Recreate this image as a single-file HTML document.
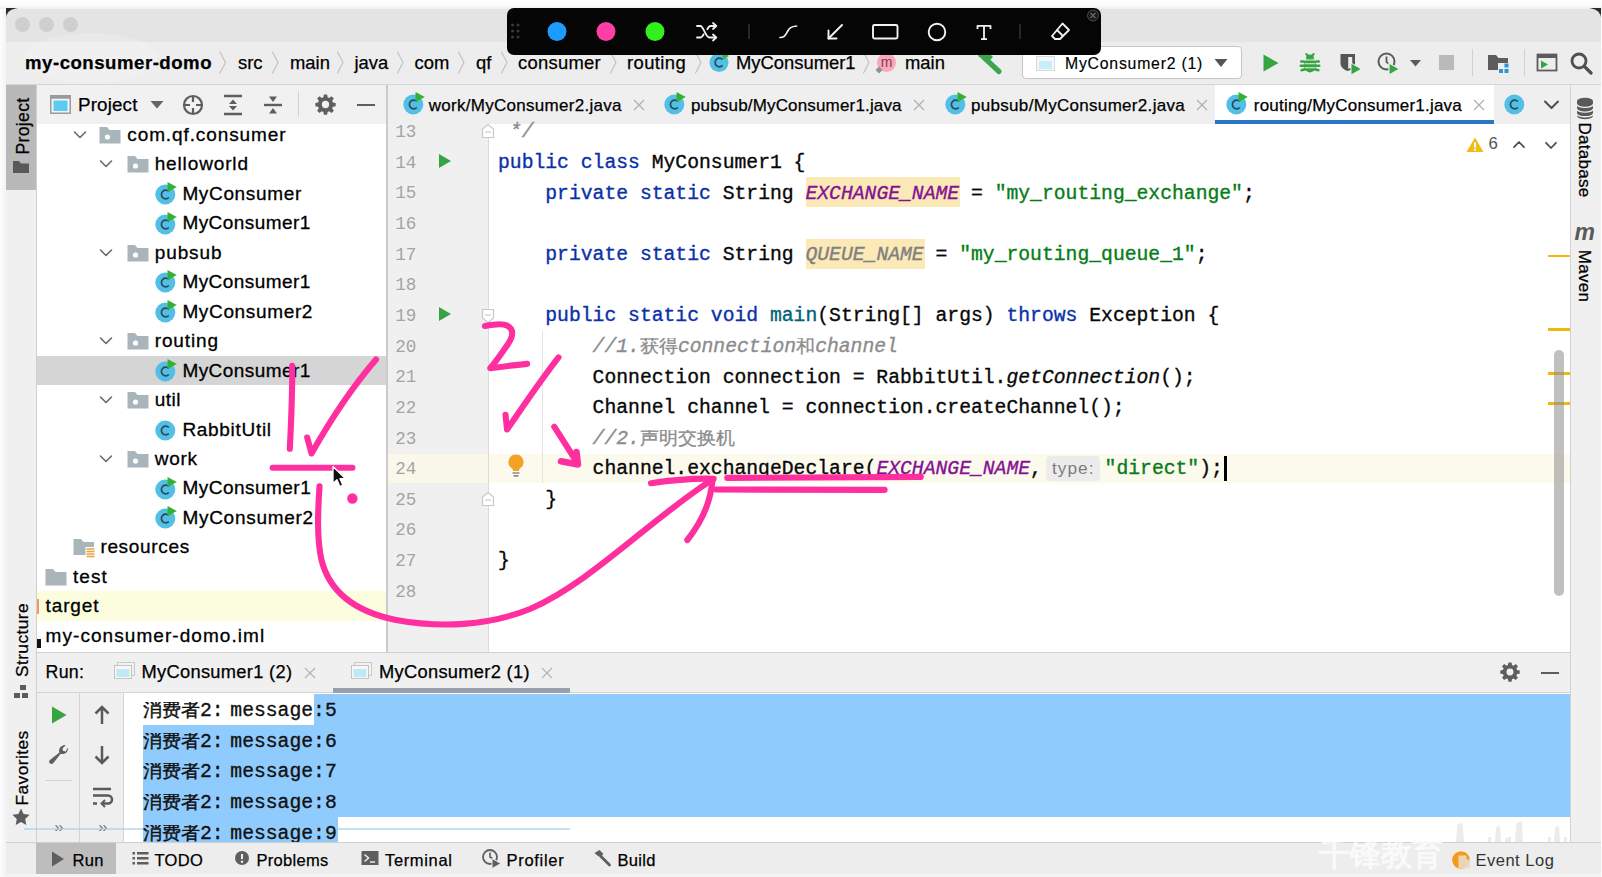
<!DOCTYPE html>
<html>
<head>
<meta charset="utf-8">
<title>my-consumer-domo</title>
<style>
html,body{margin:0;padding:0;}
body{width:1602px;height:877px;overflow:hidden;background:#fdfdfd;position:relative;font-family:"Liberation Sans",sans-serif;color:#000;}
.abs{position:absolute;}
#win{position:absolute;left:6px;top:8px;width:1595px;height:869px;background:#ececec;border-radius:10px 10px 0 0;overflow:hidden;}
/* all children of #root are positioned in page coords */
#root{position:absolute;left:0;top:0;width:1602px;height:877px;overflow:hidden;}
.t{position:absolute;white-space:pre;line-height:1;}
.ui{font-family:"Liberation Sans",sans-serif;font-size:18.5px;color:#000;-webkit-text-stroke:0.25px #000;}
.mono{font-family:"Liberation Mono",monospace;font-size:19.72px;color:#000;}
.cjk{display:inline-block;text-align:center;overflow:hidden;vertical-align:top;font-size:18.8px;-webkit-text-stroke:0;}
/* code colours */
.kw{color:#0a31a8;}
.str{color:#067d17;}
.fld{color:#871094;font-style:italic;}
.cm{color:#8c8c8c;font-style:italic;}
.fn{color:#00627a;}
.it{font-style:italic;}
.ln{position:absolute;left:388px;width:28px;text-align:right;color:#a4a4a4;font-family:"Liberation Mono",monospace;font-size:17.6px;line-height:1;white-space:pre;}
.code{position:absolute;left:498px;white-space:pre;line-height:1;font-family:"Liberation Mono",monospace;font-size:19.72px;color:#080808;-webkit-text-stroke:0.35px;}
.con{color:#111;}
.con .cjk{-webkit-text-stroke:0.4px;}
.cm .cjk{-webkit-text-stroke:0.3px;}
.tree{position:absolute;white-space:pre;line-height:1;font-size:19.6px;color:#000;-webkit-text-stroke:0.3px #000;}
</style>
</head>
<body>
<div id="root">

<!-- ===== window background ===== -->
<div class="abs" style="left:0;top:0;width:1602px;height:10px;background:linear-gradient(to bottom,#fefefe 0,#fcfcfc 50%,#f2f2f2 80%,#e8e8e8 100%);"></div>
<div class="abs" style="left:0;top:9px;width:8px;height:868px;background:linear-gradient(to right,#fdfdfd 0,#f8f8f8 40%,#f0f0f0 100%);"></div>
<div class="abs" style="left:6px;top:8.500px;width:1595px;height:869px;background:#ededed;border-radius:9px 9px 0 0;"></div>
<!-- dark corner artefacts -->
<svg class="abs" style="left:6px;top:8px" width="12" height="12"><path d="M0 0H12C5 1 1 5 0 12Z" fill="#2a2a2e"/></svg>
<svg class="abs" style="left:1589px;top:8px" width="12" height="12"><path d="M12 0H0C7 1 11 5 12 12Z" fill="#2a2a2e"/></svg>

<!-- ===== title bar ===== -->
<div class="abs" id="titlebar" style="left:6px;top:8.5px;width:1595px;height:33px;background:#e4e4e4;border-radius:9px 9px 0 0;"></div>
<div class="abs" style="left:6px;top:41.5px;width:1595px;height:1px;background:#dcdcdc;"></div>
<div class="abs" style="left:15px;top:17px;width:15px;height:15px;border-radius:50%;background:#cfcfcf;"></div>
<div class="abs" style="left:39px;top:17px;width:15px;height:15px;border-radius:50%;background:#cfcfcf;"></div>
<div class="abs" style="left:63px;top:17px;width:15px;height:15px;border-radius:50%;background:#cfcfcf;"></div>

<!-- ===== nav bar ===== -->
<div class="abs" id="navbar" style="left:6px;top:42px;width:1595px;height:42px;background:#ededed;"></div>
<div class="abs" style="left:6px;top:84px;width:1595px;height:1px;background:#d6d6d6;"></div>

<!-- faint watermark blob in nav bar -->
<div class="abs" style="left:24px;top:33px;width:134px;height:50px;border-radius:50%;background:rgba(255,255,255,0.18);"></div>
<div class="t ui" id="nv0" style="left:25px;top:53.5px;font-weight:bold;font-size:18.6px;letter-spacing:0.52px;">my-consumer-domo</div>
<svg class="abs" style="left:0;top:42px" width="960" height="42" viewBox="0 42 960 42" fill="none" stroke="#c2c2c2" stroke-width="1.2" stroke-linecap="round" stroke-linejoin="round">
<path d="M220 52l5.5 10.5L220 73"/><path d="M272.5 52l5.5 10.5-5.5 10.5"/><path d="M337.500 52l5.500 10.500-5.500 10.500"/><path d="M397.500 52l5.500 10.500-5.500 10.500"/><path d="M458.500 52l5.500 10.500-5.500 10.500"/><path d="M501.500 52l5.500 10.500-5.500 10.500"/><path d="M610.500 52l5.500 10.500-5.500 10.500"/><path d="M695.500 52l5.500 10.500-5.500 10.500"/><path d="M863.500 52l5.500 10.500-5.500 10.500"/>
</svg>
<div class="t ui" id="nv1" style="left:238px;top:53.5px;font-size:18.4px;">src</div>
<div class="t ui" id="nv2" style="left:290px;top:53.5px;font-size:18.4px;">main</div>
<div class="t ui" id="nv3" style="left:354.5px;top:53.5px;font-size:18.4px;">java</div>
<div class="t ui" id="nv4" style="left:414.5px;top:53.5px;font-size:18.4px;">com</div>
<div class="t ui" id="nv5" style="left:476px;top:53.5px;font-size:18.4px;">qf</div>
<div class="t ui" id="nv6" style="left:518px;top:53.5px;font-size:18.4px;letter-spacing:0.27px;">consumer</div>
<div class="t ui" id="nv7" style="left:627px;top:53.5px;font-size:18.4px;letter-spacing:0.4px;">routing</div>
<!-- class icon -->
<svg class="abs" style="left:709px;top:51px" width="22" height="22" viewBox="0 0 22 22"><circle cx="10" cy="11.500" r="9.5" fill="#52bfe6"/><path d="M13.6 8.6a4.300 4.300 0 1 0 0 5.800" fill="none" stroke="#2d4a58" stroke-width="1.700"/><path d="M13.500 1l6.500 4-6.500 4z" fill="#3fae49"/></svg>
<div class="t ui" id="nv8" style="left:736px;top:53.5px;font-size:18.4px;">MyConsumer1</div>
<!-- method icon -->
<svg class="abs" style="left:874px;top:52px" width="24" height="24" viewBox="0 0 24 24"><circle cx="12.500" cy="10.500" r="9.5" fill="#f7a8ba"/><text x="12.500" y="15" font-family="Liberation Sans, sans-serif" font-size="14" text-anchor="middle" fill="#8b3a4c">m</text><path d="M5 14.500l3.500 3.500-3.500 3.500-3.500-3.500z" fill="#8a9199"/></svg>
<div class="t ui" id="nv9" style="left:905px;top:53.5px;font-size:18.4px;">main</div>
<!-- hammer -->
<svg class="abs" style="left:973px;top:47.500px" width="32" height="32" viewBox="0 0 32 32"><path d="M6 6l8-3 6 6-3 3-2.500-1.500L12 13 5 8z" fill="#3da64c"/><path d="M11 9.500l15 14" stroke="#3da64c" stroke-width="5.200" stroke-linecap="round"/></svg>
<!-- run config box -->
<div class="abs" style="left:1022px;top:46px;width:218px;height:31px;background:#fff;border:1px solid #c6c6c6;border-radius:4px;"></div>
<svg class="abs" style="left:1036px;top:56px" width="20" height="16" viewBox="0 0 20 16"><rect x="0.500" y="0.500" width="18" height="14" fill="#f4f7f9" stroke="#d5dade"/><rect x="3" y="5" width="13" height="8" fill="#c9eefb"/></svg>
<div class="t ui" id="nvrc" style="left:1065px;top:56.4px;font-size:15.8px;letter-spacing:0.78px;-webkit-text-stroke:0.15px #000;">MyConsumer2 (1)</div>
<svg class="abs" style="left:1213px;top:57px" width="16" height="12" viewBox="0 0 16 12"><path d="M1.500 2h13l-6.500 8z" fill="#555"/></svg>
<!-- run -->
<svg class="abs" style="left:1260px;top:52px" width="22" height="22" viewBox="0 0 22 22"><path d="M3.500 2.500l15 8.500-15 8.500z" fill="#36a443"/></svg>
<!-- debug bug -->
<svg class="abs" style="left:1298px;top:51px" width="24" height="24" viewBox="0 0 24 24"><g fill="#36a443"><ellipse cx="12" cy="14.200" rx="6.300" ry="7.300"/><path d="M7.800 7.800a4.200 4.200 0 0 1 8.400 0z"/></g><g stroke="#36a443" stroke-width="2.500" stroke-linecap="round"><path d="M3.200 10.500h4M16.800 10.500h4M2.800 14.800h4M17.200 14.800h4M3.600 19.200l3.600-1M20.400 19.200l-3.600-1"/><path d="M8.300 3l1.700 2M15.700 3l-1.700 2" stroke-width="2"/></g><g stroke="#ededed" stroke-width="1.100"><path d="M6 9h12M6.500 12.700h11M6.500 16.700h11"/></g></svg>
<!-- coverage -->
<svg class="abs" style="left:1338px;top:51px" width="26" height="26" viewBox="0 0 26 26"><path d="M2.500 3h14.500v9.500c0 3.500-3.500 6.500-7.250 7.500C6 19 2.500 16 2.500 12.500z" fill="#555"/><path d="M10.200 6h4v9.500c-1 1.200-2.300 1.800-4 2.300z" fill="#ededed"/><path d="M13 12l10.500 6-10.500 6z" fill="#36a443" stroke="#eeeeee" stroke-width="1"/></svg>
<!-- profiler -->
<svg class="abs" style="left:1376px;top:51px" width="26" height="26" viewBox="0 0 26 26"><circle cx="10.500" cy="10.500" r="8" fill="none" stroke="#5a5a5a" stroke-width="2"/><path d="M10.500 5.500v5.500l3 2" fill="none" stroke="#5a5a5a" stroke-width="1.800"/><path d="M13 12l10.500 6-10.500 6z" fill="#36a443" stroke="#eeeeee" stroke-width="1.200"/></svg>
<svg class="abs" style="left:1409px;top:58px" width="13" height="10" viewBox="0 0 13 10"><path d="M1 2h11l-5.500 6.500z" fill="#5a5a5a"/></svg>
<!-- stop -->
<div class="abs" style="left:1439px;top:55px;width:15px;height:15px;background:#bababa;"></div>
<div class="abs" style="left:1472px;top:49px;width:1px;height:27px;background:#d0d0d0;"></div>
<!-- project structure -->
<svg class="abs" style="left:1486px;top:52px" width="26" height="24" viewBox="0 0 26 24"><path d="M2 3h8l2.500 3H22v12H2z" fill="#5c5c5c"/><path d="M12 11h12v12H12z" fill="#eeeeee"/><rect x="13" y="17" width="4" height="4" fill="#2b95d6"/><rect x="18.500" y="17" width="4" height="4" fill="#2b95d6"/><rect x="18.500" y="11.500" width="4" height="4" fill="#2b95d6"/></svg>
<div class="abs" style="left:1524px;top:49px;width:1px;height:27px;background:#d0d0d0;"></div>
<!-- run anything -->
<svg class="abs" style="left:1536px;top:53px" width="24" height="20" viewBox="0 0 24 20"><rect x="1.500" y="1.500" width="19" height="16" fill="none" stroke="#5c5c5c" stroke-width="1.800"/><rect x="1" y="1" width="20" height="4" fill="#5c5c5c"/><path d="M5 7.500l7 4-7 4z" fill="#36a443"/></svg>
<!-- search -->
<svg class="abs" style="left:1569px;top:50.500px" width="24" height="24" viewBox="0 0 24 24" fill="none" stroke="#505050" stroke-width="2.800"><circle cx="10" cy="10" r="7"/><path d="M15.500 15.500l6.500 6.500" stroke-linecap="round" stroke-width="3.200"/></svg>


<!-- ===== left stripe ===== -->
<div class="abs" style="left:6px;top:85px;width:30px;height:757px;background:#f0f0f0;"></div>
<div class="abs" style="left:36px;top:85px;width:1px;height:757px;background:#d0d0d0;"></div>
<div class="abs" style="left:6px;top:85px;width:30px;height:105px;background:#b9b9b9;"></div>


<!-- ===== project panel ===== -->
<div class="abs" style="left:37px;top:85px;width:349px;height:39px;background:#f1f1f1;"></div>
<div class="abs" style="left:37px;top:124px;width:349px;height:528px;background:#ffffff;"></div>
<div class="abs" style="left:386px;top:85px;width:1.6px;height:567px;background:#cbcbcb;"></div>
<!-- left stripe: Project tab -->
<div class="t ui" style="left:-14.8px;top:116px;width:80px;height:20px;text-align:center;font-size:17.6px;transform:rotate(-90deg);transform-origin:center;letter-spacing:0.3px;" id="lsproj">Project</div>
<svg class="abs" style="left:12px;top:159px" width="18" height="16" viewBox="0 0 18 16"><path d="M1 2h6l2 2.500h8V14H1z" fill="#595959"/></svg>
<!-- Structure / Favorites -->
<div class="t ui" style="left:-21.5px;top:630px;width:90px;height:20px;text-align:center;font-size:17.4px;transform:rotate(-90deg);letter-spacing:0.4px;" id="lsstruct">Structure</div>
<svg class="abs" style="left:13px;top:684px" width="16" height="16" viewBox="0 0 16 16" fill="#5c5c5c"><rect x="7" y="1" width="6" height="5"/><rect x="1" y="9" width="6" height="5"/><rect x="9" y="9" width="6" height="5"/></svg>
<div class="t ui" style="left:-21.5px;top:758px;width:90px;height:20px;text-align:center;font-size:17.4px;transform:rotate(-90deg);letter-spacing:0.4px;" id="lsfav">Favorites</div>
<svg class="abs" style="left:11px;top:807px" width="20" height="20" viewBox="0 0 20 20"><path d="M10 1.500l2.600 5.600 6 .7-4.400 4.200 1.100 6-5.300-3-5.300 3 1.100-6L1.400 7.800l6-.7z" fill="#5c5c5c"/></svg>
<!-- black mark by iml row -->
<div class="abs" style="left:37px;top:639px;width:3.5px;height:8.500px;background:#111;"></div>

<!-- project header -->
<svg class="abs" style="left:50px;top:95px" width="22" height="20" viewBox="0 0 22 20"><rect x="0.750" y="0.750" width="19.500" height="17.500" fill="#f4f4f4" stroke="#9a9a9a" stroke-width="1.500"/><rect x="0.750" y="0.750" width="19.500" height="3" fill="#9a9a9a"/><rect x="3.500" y="5.500" width="14" height="10.500" fill="#5ccbf0"/></svg>
<div class="t ui" id="pjh" style="left:78px;top:95.5px;font-size:18.8px;letter-spacing:0.15px;">Project</div>
<svg class="abs" style="left:149px;top:99px" width="16" height="11" viewBox="0 0 16 11"><path d="M1.500 2h13l-6.500 7.500z" fill="#666"/></svg>
<!-- locate -->
<svg class="abs" style="left:181px;top:93px" width="24" height="24" viewBox="0 0 24 24" fill="none" stroke="#5e5e5e" stroke-width="2.200"><circle cx="12" cy="12" r="9"/><path d="M12 3v6M12 15v6M3 12h6M15 12h6"/></svg>
<!-- expand all -->
<svg class="abs" style="left:222px;top:93px" width="22" height="24" viewBox="0 0 22 24" fill="none" stroke="#5e5e5e" stroke-width="2.400"><path d="M2 3h18M2 21h18"/><path d="M11 6.500l4 4.500h-8zM11 17.500l4-4.500h-8z" fill="#5e5e5e" stroke="none"/></svg>
<!-- collapse all -->
<svg class="abs" style="left:262px;top:93px" width="22" height="24" viewBox="0 0 22 24" fill="none" stroke="#5e5e5e" stroke-width="2.400"><path d="M2 12h18"/><path d="M11 9l4-5.500h-8zM11 15l4 5.500h-8z" fill="#5e5e5e" stroke="none"/></svg>
<div class="abs" style="left:298px;top:91px;width:1px;height:26px;background:#d3d3d3;"></div>
<!-- gear -->
<svg class="abs" style="left:314px;top:93px" width="23" height="23" viewBox="0 0 24 24"><path fill="#5e5e5e" fill-rule="evenodd" d="M10.300 1.500h3.400l.5 2.900 1.700.7 2.400-1.700 2.400 2.400-1.700 2.400.7 1.700 2.900.5v3.400l-2.900.5-.7 1.700 1.700 2.400-2.400 2.400-2.400-1.700-1.700.7-.5 2.900h-3.400l-.5-2.900-1.700-.7-2.400 1.700-2.400-2.400 1.700-2.400-.7-1.700-2.900-.5v-3.400l2.900-.5.700-1.700-1.700-2.400 2.400-2.400 2.400 1.700 1.700-.7zM12 8.200a3.800 3.800 0 1 0 0 7.600 3.800 3.800 0 0 0 0-7.600z"/></svg>
<div class="abs" style="left:357px;top:103.500px;width:18px;height:2.200px;background:#5e5e5e;"></div>

<!-- tree rows backgrounds -->
<div class="abs" style="left:37px;top:355.500px;width:349px;height:29.500px;background:#d5d5d5;"></div>
<div class="abs" style="left:37px;top:591px;width:349px;height:29.500px;background:#fcfcdf;"></div>
<div class="abs" style="left:37px;top:598.500px;width:2.200px;height:15px;background:#ee9a62;"></div>
<!-- TREE-START -->
<svg class="abs" style="left:73px;top:129.7px" width="14" height="10" viewBox="0 0 14 10"><path d="M1.500 2l5.500 5.500L12.500 2" fill="none" stroke="#6a6a6a" stroke-width="1.600" stroke-linecap="round" stroke-linejoin="round"/></svg>
<svg class="abs" style="left:99px;top:125.7px" width="22" height="18" viewBox="0 0 22 18"><path d="M0.500 1h7.500l2.500 3H21.500v13.500H0.500z" fill="#a9b4bb"/><circle cx="8.500" cy="11" r="2.600" fill="#fff"/></svg>
<div class="tree" id="tr0" style="left:127.3px;top:125.0px;font-size:19.0px;letter-spacing:0.89px;">com.qf.consumer</div>
<svg class="abs" style="left:99px;top:159.1px" width="14" height="10" viewBox="0 0 14 10"><path d="M1.500 2l5.500 5.500L12.500 2" fill="none" stroke="#6a6a6a" stroke-width="1.600" stroke-linecap="round" stroke-linejoin="round"/></svg>
<svg class="abs" style="left:127px;top:155.1px" width="22" height="18" viewBox="0 0 22 18"><path d="M0.500 1h7.500l2.500 3H21.500v13.500H0.500z" fill="#a9b4bb"/><circle cx="8.500" cy="11" r="2.600" fill="#fff"/></svg>
<div class="tree" id="tr1" style="left:154.7px;top:154.4px;font-size:19.0px;letter-spacing:0.86px;">helloworld</div>
<svg class="abs" style="left:154.7px;top:182.1px" width="22" height="23" viewBox="0 0 22 23"><circle cx="10.300" cy="12.500" r="10" fill="#52bfe6"/><path d="M13.800 9.500a4.300 4.300 0 1 0 0 6" fill="none" stroke="#2d4a58" stroke-width="1.700"/><path d="M12.500 0l9.300 5-9.300 5.300z" fill="#35b035"/></svg>
<div class="tree" id="tr2" style="left:182.4px;top:183.9px;font-size:19.0px;letter-spacing:0.65px;">MyConsumer</div>
<svg class="abs" style="left:154.7px;top:211.5px" width="22" height="23" viewBox="0 0 22 23"><circle cx="10.300" cy="12.500" r="10" fill="#52bfe6"/><path d="M13.800 9.500a4.300 4.300 0 1 0 0 6" fill="none" stroke="#2d4a58" stroke-width="1.700"/><path d="M12.500 0l9.300 5-9.300 5.300z" fill="#35b035"/></svg>
<div class="tree" id="tr3" style="left:182.4px;top:213.3px;font-size:19.0px;letter-spacing:0.44px;">MyConsumer1</div>
<svg class="abs" style="left:99px;top:247.5px" width="14" height="10" viewBox="0 0 14 10"><path d="M1.500 2l5.500 5.500L12.500 2" fill="none" stroke="#6a6a6a" stroke-width="1.600" stroke-linecap="round" stroke-linejoin="round"/></svg>
<svg class="abs" style="left:127px;top:243.5px" width="22" height="18" viewBox="0 0 22 18"><path d="M0.500 1h7.500l2.500 3H21.500v13.500H0.500z" fill="#a9b4bb"/><circle cx="8.500" cy="11" r="2.600" fill="#fff"/></svg>
<div class="tree" id="tr4" style="left:154.7px;top:242.8px;font-size:19.0px;letter-spacing:0.91px;">pubsub</div>
<svg class="abs" style="left:154.7px;top:270.4px" width="22" height="23" viewBox="0 0 22 23"><circle cx="10.300" cy="12.500" r="10" fill="#52bfe6"/><path d="M13.800 9.500a4.300 4.300 0 1 0 0 6" fill="none" stroke="#2d4a58" stroke-width="1.700"/><path d="M12.500 0l9.300 5-9.300 5.300z" fill="#35b035"/></svg>
<div class="tree" id="tr5" style="left:182.4px;top:272.2px;font-size:19.0px;letter-spacing:0.44px;">MyConsumer1</div>
<svg class="abs" style="left:154.7px;top:299.9px" width="22" height="23" viewBox="0 0 22 23"><circle cx="10.300" cy="12.500" r="10" fill="#52bfe6"/><path d="M13.800 9.500a4.300 4.300 0 1 0 0 6" fill="none" stroke="#2d4a58" stroke-width="1.700"/><path d="M12.500 0l9.300 5-9.300 5.300z" fill="#35b035"/></svg>
<div class="tree" id="tr6" style="left:182.4px;top:301.7px;font-size:19.0px;letter-spacing:0.65px;">MyConsumer2</div>
<svg class="abs" style="left:99px;top:335.9px" width="14" height="10" viewBox="0 0 14 10"><path d="M1.500 2l5.500 5.500L12.500 2" fill="none" stroke="#6a6a6a" stroke-width="1.600" stroke-linecap="round" stroke-linejoin="round"/></svg>
<svg class="abs" style="left:127px;top:331.9px" width="22" height="18" viewBox="0 0 22 18"><path d="M0.500 1h7.500l2.500 3H21.500v13.500H0.500z" fill="#a9b4bb"/><circle cx="8.500" cy="11" r="2.600" fill="#fff"/></svg>
<div class="tree" id="tr7" style="left:154.7px;top:331.2px;font-size:19.0px;letter-spacing:0.89px;">routing</div>
<svg class="abs" style="left:154.7px;top:358.8px" width="22" height="23" viewBox="0 0 22 23"><circle cx="10.300" cy="12.500" r="10" fill="#52bfe6"/><path d="M13.800 9.500a4.300 4.300 0 1 0 0 6" fill="none" stroke="#2d4a58" stroke-width="1.700"/><path d="M12.500 0l9.300 5-9.300 5.300z" fill="#35b035"/></svg>
<div class="tree" id="tr8" style="left:182.4px;top:360.6px;font-size:19.0px;letter-spacing:0.44px;">MyConsumer1</div>
<svg class="abs" style="left:99px;top:394.8px" width="14" height="10" viewBox="0 0 14 10"><path d="M1.500 2l5.500 5.500L12.500 2" fill="none" stroke="#6a6a6a" stroke-width="1.600" stroke-linecap="round" stroke-linejoin="round"/></svg>
<svg class="abs" style="left:127px;top:390.8px" width="22" height="18" viewBox="0 0 22 18"><path d="M0.500 1h7.500l2.500 3H21.500v13.500H0.500z" fill="#a9b4bb"/><circle cx="8.500" cy="11" r="2.600" fill="#fff"/></svg>
<div class="tree" id="tr9" style="left:154.7px;top:390.1px;font-size:19.0px;letter-spacing:0.49px;">util</div>
<svg class="abs" style="left:154.7px;top:417.7px" width="22" height="23" viewBox="0 0 22 23"><circle cx="10.300" cy="12.500" r="10" fill="#52bfe6"/><path d="M13.800 9.500a4.300 4.300 0 1 0 0 6" fill="none" stroke="#2d4a58" stroke-width="1.700"/></svg>
<div class="tree" id="tr10" style="left:182.4px;top:419.5px;font-size:19.0px;letter-spacing:0.70px;">RabbitUtil</div>
<svg class="abs" style="left:99px;top:453.6px" width="14" height="10" viewBox="0 0 14 10"><path d="M1.500 2l5.500 5.500L12.500 2" fill="none" stroke="#6a6a6a" stroke-width="1.600" stroke-linecap="round" stroke-linejoin="round"/></svg>
<svg class="abs" style="left:127px;top:449.6px" width="22" height="18" viewBox="0 0 22 18"><path d="M0.500 1h7.500l2.500 3H21.500v13.500H0.500z" fill="#a9b4bb"/><circle cx="8.500" cy="11" r="2.600" fill="#fff"/></svg>
<div class="tree" id="tr11" style="left:154.7px;top:448.9px;font-size:19.0px;letter-spacing:0.74px;">work</div>
<svg class="abs" style="left:154.7px;top:476.6px" width="22" height="23" viewBox="0 0 22 23"><circle cx="10.300" cy="12.500" r="10" fill="#52bfe6"/><path d="M13.800 9.500a4.300 4.300 0 1 0 0 6" fill="none" stroke="#2d4a58" stroke-width="1.700"/><path d="M12.500 0l9.300 5-9.300 5.300z" fill="#35b035"/></svg>
<div class="tree" id="tr12" style="left:182.4px;top:478.4px;font-size:19.0px;letter-spacing:0.48px;">MyConsumer1</div>
<svg class="abs" style="left:154.7px;top:506.0px" width="22" height="23" viewBox="0 0 22 23"><circle cx="10.300" cy="12.500" r="10" fill="#52bfe6"/><path d="M13.800 9.500a4.300 4.300 0 1 0 0 6" fill="none" stroke="#2d4a58" stroke-width="1.700"/><path d="M12.500 0l9.300 5-9.300 5.300z" fill="#35b035"/></svg>
<div class="tree" id="tr13" style="left:182.4px;top:507.8px;font-size:19.0px;letter-spacing:0.72px;">MyConsumer2</div>
<svg class="abs" style="left:73px;top:538.0px" width="23" height="20" viewBox="0 0 23 20"><path d="M0.500 1h7.500l2.500 3H21v13H0.500z" fill="#a9b4bb"/><rect x="12.500" y="9" width="10" height="11" fill="#fff"/><path d="M13.500 11h8M13.500 13.500h8M13.500 16h8M13.500 18.500h8" stroke="#e9a53c" stroke-width="1.500"/></svg>
<div class="tree" id="tr14" style="left:100.4px;top:537.3px;font-size:19.0px;letter-spacing:0.67px;">resources</div>
<svg class="abs" style="left:45px;top:567.5px" width="22" height="18" viewBox="0 0 22 18"><path d="M0.500 1h7.500l2.500 3H21.500v13.500H0.500z" fill="#a9b4bb"/></svg>
<div class="tree" id="tr15" style="left:73px;top:566.8px;font-size:19.0px;letter-spacing:1.02px;">test</div>
<div class="tree" id="tr16" style="left:45.6px;top:596.2px;font-size:19.0px;letter-spacing:0.86px;">target</div>
<div class="tree" id="tr17" style="left:45.6px;top:625.6px;font-size:19.0px;letter-spacing:1.06px;">my-consumer-domo.iml</div>
<!-- TREE-END -->


<!-- ===== editor tabs ===== -->
<div class="abs" style="left:388px;top:85px;width:1182px;height:39px;background:#efefef;"></div>
<div class="abs" style="left:388px;top:123.5px;width:1182px;height:1px;background:#d6d6d6;"></div>
<!-- active tab bg -->
<div class="abs" style="left:1215px;top:85px;width:279px;height:35px;background:#ffffff;"></div>
<div class="abs" style="left:1215px;top:120px;width:279px;height:4.500px;background:#2a75c4;"></div>
<!-- tab icons -->
<svg class="abs" style="left:402px;top:91.6px;margin-left:0.7px" width="22" height="23" viewBox="0 0 22 23"><circle cx="10.300" cy="12.500" r="10" fill="#52bfe6"/><path d="M13.800 9.500a4.300 4.300 0 1 0 0 6" fill="none" stroke="#2d4a58" stroke-width="1.700"/><path d="M12.500 0l9.300 5-9.300 5.300z" fill="#35b035"/></svg>
<div class="t ui" id="tb1" style="left:428.700px;top:96.6px;font-size:17px;letter-spacing:0.290px;">work/MyConsumer2.java</div>
<svg class="abs" style="left:633px;top:98.500px" width="12" height="12" viewBox="0 0 12 12"><path d="M1 1l10 10M11 1L1 11" stroke="#b0b0b0" stroke-width="1.300"/></svg>
<svg class="abs" style="left:663.700px;top:91.6px;margin-left:0.7px" width="22" height="23" viewBox="0 0 22 23"><circle cx="10.300" cy="12.500" r="10" fill="#52bfe6"/><path d="M13.800 9.500a4.300 4.300 0 1 0 0 6" fill="none" stroke="#2d4a58" stroke-width="1.700"/><path d="M12.500 0l9.300 5-9.300 5.300z" fill="#35b035"/></svg>
<div class="t ui" id="tb2" style="left:691px;top:96.6px;font-size:17px;letter-spacing:0.165px;">pubsub/MyConsumer1.java</div>
<svg class="abs" style="left:913px;top:98.500px" width="12" height="12" viewBox="0 0 12 12"><path d="M1 1l10 10M11 1L1 11" stroke="#b0b0b0" stroke-width="1.300"/></svg>
<svg class="abs" style="left:944px;top:91.6px;margin-left:0.7px" width="22" height="23" viewBox="0 0 22 23"><circle cx="10.300" cy="12.500" r="10" fill="#52bfe6"/><path d="M13.800 9.500a4.300 4.300 0 1 0 0 6" fill="none" stroke="#2d4a58" stroke-width="1.700"/><path d="M12.500 0l9.300 5-9.300 5.300z" fill="#35b035"/></svg>
<div class="t ui" id="tb3" style="left:971px;top:96.6px;font-size:17px;letter-spacing:0.310px;">pubsub/MyConsumer2.java</div>
<svg class="abs" style="left:1196px;top:98.500px" width="12" height="12" viewBox="0 0 12 12"><path d="M1 1l10 10M11 1L1 11" stroke="#b0b0b0" stroke-width="1.300"/></svg>
<svg class="abs" style="left:1225.700px;top:91.6px;margin-left:0.7px" width="22" height="23" viewBox="0 0 22 23"><circle cx="10.300" cy="12.500" r="10" fill="#52bfe6"/><path d="M13.800 9.500a4.300 4.300 0 1 0 0 6" fill="none" stroke="#2d4a58" stroke-width="1.700"/><path d="M12.500 0l9.300 5-9.300 5.300z" fill="#35b035"/></svg>
<div class="t ui" id="tb4" style="left:1253.800px;top:96.6px;font-size:17px;letter-spacing:0.210px;">routing/MyConsumer1.java</div>
<svg class="abs" style="left:1473px;top:98.500px" width="12" height="12" viewBox="0 0 12 12"><path d="M1 1l10 10M11 1L1 11" stroke="#b0b0b0" stroke-width="1.300"/></svg>
<svg class="abs" style="left:1503.700px;top:91.6px;margin-left:0.7px" width="22" height="23" viewBox="0 0 22 23"><circle cx="10.300" cy="12.500" r="10" fill="#52bfe6"/><path d="M13.800 9.500a4.300 4.300 0 1 0 0 6" fill="none" stroke="#2d4a58" stroke-width="1.700"/></svg>
<svg class="abs" style="left:1543px;top:99px" width="17" height="12" viewBox="0 0 17 12"><path d="M2 2.500l6.500 6.500L15 2.500" fill="none" stroke="#4d4d4d" stroke-width="2" stroke-linecap="round" stroke-linejoin="round"/></svg>


<!-- ===== editor ===== -->
<div class="abs" style="left:388px;top:124px;width:1182px;height:528px;background:#ffffff;"></div>
<div class="abs" style="left:388px;top:124px;width:100px;height:528px;background:#f0f0f0;"></div>
<div class="abs" style="left:488px;top:124px;width:1px;height:528px;background:#d9d9d9;"></div>
<!-- EDITOR-START -->
<div class="abs" style="left:388px;top:453.5px;width:1182px;height:29px;background:#fcfaed;"></div>
<div class="abs" style="left:388px;top:453.5px;width:100px;height:29px;background:#faf8ea;"></div>
<div class="abs" style="left:488px;top:124px;width:1px;height:528px;background:#dcdcdc;"></div>
<div class="abs" style="left:542px;top:330.5px;width:1px;height:152.6px;background:#e3e3e3;"></div>
<div class="abs" style="left:805.5px;top:177.3px;width:154.3px;height:30px;background:#fbe9b7;"></div>
<div class="abs" style="left:805.5px;top:238.6px;width:119px;height:30px;background:#fbe9b7;"></div>
<div class="abs" style="left:1046px;top:455.5px;width:54px;height:25.5px;background:#ececec;border-radius:4px;"></div>
<div class="t" id="hint" style="left:1052px;top:459.5px;font-family:'Liberation Sans',sans-serif;font-size:17.2px;color:#7c7c7c;letter-spacing:1.05px;">type:</div>
<div class="ln" style="left:395.2px;top:124.1px;width:auto;">13</div>
<div class="ln" style="left:395.2px;top:154.7px;width:auto;">14</div>
<div class="ln" style="left:395.2px;top:185.4px;width:auto;">15</div>
<div class="ln" style="left:395.2px;top:216.0px;width:auto;">16</div>
<div class="ln" style="left:395.2px;top:246.7px;width:auto;">17</div>
<div class="ln" style="left:395.2px;top:277.3px;width:auto;">18</div>
<div class="ln" style="left:395.2px;top:307.9px;width:auto;">19</div>
<div class="ln" style="left:395.2px;top:338.6px;width:auto;">20</div>
<div class="ln" style="left:395.2px;top:369.2px;width:auto;">21</div>
<div class="ln" style="left:395.2px;top:399.9px;width:auto;">22</div>
<div class="ln" style="left:395.2px;top:430.5px;width:auto;">23</div>
<div class="ln" style="left:395.2px;top:461.1px;width:auto;">24</div>
<div class="ln" style="left:395.2px;top:491.8px;width:auto;">25</div>
<div class="ln" style="left:395.2px;top:522.4px;width:auto;">26</div>
<div class="ln" style="left:395.2px;top:553.1px;width:auto;">27</div>
<div class="ln" style="left:395.2px;top:583.7px;width:auto;">28</div>
<div class="code" style="left:498.0px;top:123.4px;"> <span class="cm">*/</span></div>
<div class="code" id="c14" style="left:498.0px;top:154.0px;"><span class="kw">public class</span> MyConsumer1 {</div>
<div class="code" id="c15" style="left:498.0px;top:184.7px;">    <span class="kw">private static</span> String <span class="fld">EXCHANGE_NAME</span> = <span class="str">"my_routing_exchange"</span>;</div>
<div class="code" id="c17" style="left:498.0px;top:246.0px;">    <span class="kw">private static</span> String <span class="cm" style="color:#808080">QUEUE_NAME</span> = <span class="str">"my_routing_queue_1"</span>;</div>
<div class="code" id="c19" style="left:498.0px;top:307.2px;">    <span class="kw">public static void</span> <span class="fn">main</span>(String[] args) <span class="kw">throws</span> Exception {</div>
<div class="code" id="c20" style="left:498.0px;top:337.9px;">        <span class="cm">//1.<span class="cjk" style="width:38px;font-style:normal;">获得</span>connection<span class="cjk" style="width:19px;font-style:normal;">和</span>channel</span></div>
<div class="code" id="c21" style="left:498.0px;top:368.5px;">        Connection connection = RabbitUtil.<span class="it">getConnection</span>();</div>
<div class="code" id="c22" style="left:498.0px;top:399.2px;">        Channel channel = connection.createChannel();</div>
<div class="code" id="c23" style="left:498.0px;top:429.8px;">        <span class="cm">//2.<span class="cjk" style="width:95px;font-style:normal;">声明交换机</span></span></div>
<div class="code" id="c24" style="left:498.0px;top:460.4px;">        channel.exchangeDeclare(<span class="fld">EXCHANGE_NAME</span>,</div>
<div class="code" id="c24b" style="left:1104.6px;top:460.4px;"><span class="str">"direct"</span>);</div>
<div class="code" style="left:498.0px;top:491.1px;">    }</div>
<div class="code" style="left:498.0px;top:552.4px;">}</div>
<div class="abs" style="left:1223.5px;top:455.5px;width:3px;height:25.5px;background:#000;"></div>
<svg class="abs" style="left:438px;top:153.1px" width="14" height="16" viewBox="0 0 14 16"><path d="M1 1l12 7-12 7z" fill="#36a443"/></svg>
<svg class="abs" style="left:438px;top:306.3px" width="14" height="16" viewBox="0 0 14 16"><path d="M1 1l12 7-12 7z" fill="#36a443"/></svg>
<svg class="abs" style="left:481px;top:123.0px" width="14" height="16" viewBox="0 0 14 16"><path d="M1.500 6L7 1.500 12.500 6v8.500h-11z" fill="#fff" stroke="#c8c8c8" stroke-width="1.200"/><path d="M4 9h6" stroke="#c8c8c8" stroke-width="1.200"/></svg>
<svg class="abs" style="left:481px;top:307.8px" width="14" height="16" viewBox="0 0 14 16"><path d="M1.500 1.500h11v8.500L7 14.500 1.500 10z" fill="#fff" stroke="#c8c8c8" stroke-width="1.200"/><path d="M4 7h6" stroke="#c8c8c8" stroke-width="1.200"/></svg>
<svg class="abs" style="left:481px;top:490.7px" width="14" height="16" viewBox="0 0 14 16"><path d="M1.500 6L7 1.500 12.500 6v8.500h-11z" fill="#fff" stroke="#c8c8c8" stroke-width="1.200"/><path d="M4 9h6" stroke="#c8c8c8" stroke-width="1.200"/></svg>
<svg class="abs" style="left:506px;top:453.0px" width="20" height="26" viewBox="0 0 20 26"><path d="M10 1.500a7.500 7.500 0 0 0-4.500 13.500c1 .8 1.500 1.700 1.500 3h6c0-1.300.5-2.200 1.500-3A7.500 7.500 0 0 0 10 1.500z" fill="#f2a325"/><path d="M6.500 20h7M7.500 22.800h5" stroke="#8a8a8a" stroke-width="1.700"/></svg>
<svg class="abs" style="left:1465px;top:136px" width="20" height="18" viewBox="0 0 20 18"><path d="M10 1.500L18.500 16h-17z" fill="#f0bd14"/><path d="M10 6.500v5" stroke="#fff" stroke-width="2"/><circle cx="10" cy="13.700" r="1.100" fill="#fff"/></svg>
<div class="t" id="insp6" style="left:1488.5px;top:136.3px;font-family:'Liberation Sans',sans-serif;font-size:16.8px;color:#555;">6</div>
<svg class="abs" style="left:1511px;top:139px" width="16" height="11" viewBox="0 0 16 11"><path d="M3 8.200L8 3l5 5.200" fill="none" stroke="#505050" stroke-width="1.800" stroke-linecap="round" stroke-linejoin="round"/></svg>
<svg class="abs" style="left:1543px;top:140px" width="16" height="11" viewBox="0 0 16 11"><path d="M3 2.800l5 5.200 5-5.200" fill="none" stroke="#505050" stroke-width="1.800" stroke-linecap="round" stroke-linejoin="round"/></svg>
<div class="abs" style="left:1548px;top:254.5px;width:22px;height:2.6px;background:#efb710;"></div>
<div class="abs" style="left:1548px;top:328px;width:22px;height:2.6px;background:#efb710;"></div>
<div class="abs" style="left:1548px;top:372px;width:22px;height:2.6px;background:#efb710;"></div>
<div class="abs" style="left:1548px;top:402px;width:22px;height:2.6px;background:#efb710;"></div>
<div class="abs" style="left:1554px;top:350px;width:10px;height:246px;background:rgba(140,140,140,0.55);border-radius:5px;"></div>
<!-- EDITOR-END -->

<!-- ===== right stripe ===== -->
<div class="abs" style="left:1570px;top:85px;width:1px;height:757px;background:#d2d2d2;"></div>
<div class="abs" style="left:1571px;top:85px;width:30px;height:757px;background:#f0f0f0;"></div>
<!-- RIGHT-START -->
<svg class="abs" style="left:1575.500px;top:97px" width="18" height="23" viewBox="0 0 18 23"><path d="M1 4.200v14.600c0 1.900 3.600 3.400 8 3.400s8-1.500 8-3.400V4.200z" fill="#595959"/><ellipse cx="9" cy="4.200" rx="8" ry="3.400" fill="#595959"/><g fill="none" stroke="#f0f0f0" stroke-width="1.400"><path d="M0.500 6.800c0 2.100 3.800 3.600 8.500 3.600s8.500-1.500 8.500-3.600"/><path d="M0.500 11.500c0 2.100 3.800 3.600 8.500 3.600s8.500-1.500 8.500-3.600"/><path d="M0.500 16.200c0 2.100 3.800 3.600 8.500 3.600s8.500-1.500 8.500-3.600"/></g></svg>
<div class="t ui" id="rsdb" style="left:1537.500px;top:149.500px;width:90px;height:20px;text-align:center;font-size:17px;transform:rotate(90deg);letter-spacing:0.3px;">Database</div>
<div class="t ui" id="rsm" style="left:1574.500px;top:220.500px;font-size:23px;font-weight:bold;font-style:italic;color:#5a5a5a;-webkit-text-stroke:0;">m</div>
<div class="t ui" id="rsmv" style="left:1537.500px;top:265.500px;width:90px;height:20px;text-align:center;font-size:17px;transform:rotate(90deg);letter-spacing:0.3px;">Maven</div>
<!-- RIGHT-END -->

<!-- ===== run panel ===== -->
<div class="abs" style="left:37px;top:652px;width:1533px;height:1px;background:#d0d0d0;"></div>
<div class="abs" style="left:37px;top:653px;width:1533px;height:39px;background:#f0f0f0;"></div>
<div class="abs" style="left:37px;top:692px;width:1533px;height:1px;background:#d4d4d4;"></div>
<div class="abs" style="left:37px;top:693px;width:87px;height:149px;background:#efefef;"></div>
<div class="abs" style="left:79px;top:693px;width:1px;height:149px;background:#d4d4d4;"></div>
<div class="abs" style="left:123px;top:693px;width:1px;height:149px;background:#d4d4d4;"></div>
<div class="abs" style="left:124px;top:693px;width:1446px;height:149px;background:#ffffff;"></div>
<!-- RUN-START -->
<!-- run header -->
<div class="t ui" id="rn0" style="left:45.5px;top:663.5px;font-size:17.8px;letter-spacing:0.3px;">Run:</div>
<svg class="abs" style="left:114px;top:662px" width="21" height="18" viewBox="0 0 21 18"><rect x="3.500" y="0.500" width="17" height="13" fill="#f2f2f2" stroke="#c9c9c9"/><rect x="0.500" y="3.500" width="17" height="13" fill="#f7f7f7" stroke="#c4c4c4"/><rect x="2.500" y="7" width="13" height="8" fill="#bfe9f7"/></svg>
<div class="t ui" id="rn1" style="left:141.5px;top:663px;font-size:18.3px;letter-spacing:0.3px;">MyConsumer1 (2)</div>
<svg class="abs" style="left:304px;top:667px" width="12" height="12" viewBox="0 0 12 12"><path d="M1 1l10 10M11 1L1 11" stroke="#b5b5b5" stroke-width="1.300"/></svg>
<svg class="abs" style="left:351px;top:662px" width="21" height="18" viewBox="0 0 21 18"><rect x="3.500" y="0.500" width="17" height="13" fill="#f2f2f2" stroke="#c9c9c9"/><rect x="0.500" y="3.500" width="17" height="13" fill="#f7f7f7" stroke="#c4c4c4"/><rect x="2.500" y="7" width="13" height="8" fill="#bfe9f7"/></svg>
<div class="t ui" id="rn2" style="left:379px;top:663px;font-size:18.3px;letter-spacing:0.3px;">MyConsumer2 (1)</div>
<svg class="abs" style="left:541px;top:667px" width="12" height="12" viewBox="0 0 12 12"><path d="M1 1l10 10M11 1L1 11" stroke="#b5b5b5" stroke-width="1.300"/></svg>
<div class="abs" style="left:333px;top:688px;width:237px;height:4.500px;background:#9aa0ab;"></div>
<!-- gear / minimize -->
<svg class="abs" style="left:1499px;top:661px" width="22" height="22" viewBox="0 0 24 24"><path fill="#5e5e5e" fill-rule="evenodd" d="M10.300 1.500h3.400l.5 2.900 1.700.7 2.400-1.700 2.400 2.400-1.700 2.400.7 1.700 2.900.5v3.400l-2.900.5-.7 1.700 1.700 2.400-2.400 2.400-2.400-1.700-1.700.7-.5 2.900h-3.400l-.5-2.900-1.700-.7-2.400 1.700-2.400-2.400 1.700-2.400-.7-1.700-2.900-.5v-3.400l2.900-.5.700-1.700-1.700-2.400 2.400-2.400 2.400 1.700 1.700-.7zM12 8.200a3.800 3.800 0 1 0 0 7.600 3.800 3.800 0 0 0 0-7.600z"/></svg>
<div class="abs" style="left:1541px;top:671.500px;width:18px;height:2.200px;background:#5e5e5e;"></div>
<!-- left toolbars -->
<svg class="abs" style="left:50px;top:705px" width="18" height="20" viewBox="0 0 18 20"><path d="M2 1.500l14.500 8.500L2 18.500z" fill="#36a443"/></svg>
<svg class="abs" style="left:47px;top:743px" width="24" height="24" viewBox="0 0 24 24"><path d="M21 4.500a5.600 5.600 0 0 1-7.300 6.300L6.200 20.300a2.300 2.300 0 0 1-3.300-3.300l9.500-7.500A5.600 5.600 0 0 1 18.700 2.200l-3.200 3.200.6 2.600 2.600.6z" fill="#5e5e5e"/></svg>
<div class="abs" style="left:45px;top:780px;width:27px;height:1px;background:#d4d4d4;"></div>
<svg class="abs" style="left:92px;top:704px" width="20" height="22" viewBox="0 0 20 22" fill="none" stroke="#5a5a5a" stroke-width="2.500"><path d="M10 20V3M3.500 9.500L10 3l6.500 6.500"/></svg>
<svg class="abs" style="left:92px;top:744px" width="20" height="22" viewBox="0 0 20 22" fill="none" stroke="#5a5a5a" stroke-width="2.500"><path d="M10 2v17M3.500 12.500L10 19l6.500-6.500"/></svg>
<svg class="abs" style="left:91px;top:785px" width="24" height="24" viewBox="0 0 24 24" fill="none" stroke="#5a5a5a" stroke-width="2.500"><path d="M2 4h18M2 10.500h15a4 4 0 0 1 0 8h-6M2 18.500h4"/><path d="M14 15l-3.500 3.500L14 22" stroke-width="1.900"/></svg>
<div class="t" style="left:54.5px;top:819px;font-family:'Liberation Sans',sans-serif;font-size:15px;color:#6a6a6a;letter-spacing:-1px;">&#8250;&#8250;</div>
<div class="t" style="left:98.5px;top:819px;font-family:'Liberation Sans',sans-serif;font-size:15px;color:#6a6a6a;letter-spacing:-1px;">&#8250;&#8250;</div>
<!-- console selection -->
<div class="abs" style="left:313.700px;top:693.500px;width:1256.300px;height:31px;background:#90cbfe;"></div>
<div class="abs" style="left:142.600px;top:724.500px;width:1427.400px;height:92.500px;background:#90cbfe;"></div>
<div class="abs" style="left:142.600px;top:816.500px;width:195.200px;height:25.500px;background:#90cbfe;"></div>
<!-- faint blue line -->
<div class="abs" style="left:24px;top:827.500px;width:546px;height:2px;background:rgba(160,205,235,0.6);"></div>
<!-- console text -->
<div class="code con" id="co1" style="left:143px;top:702.1px;"><span class="cjk" style="width:57px;">消费者</span>2<span style="display:inline-block;width:18.5px;">:</span>message:5</div>
<div class="code con" id="co2" style="left:143px;top:732.7px;"><span class="cjk" style="width:57px;">消费者</span>2<span style="display:inline-block;width:18.5px;">:</span>message:6</div>
<div class="code con" id="co3" style="left:143px;top:763.3px;"><span class="cjk" style="width:57px;">消费者</span>2<span style="display:inline-block;width:18.5px;">:</span>message:7</div>
<div class="code con" id="co4" style="left:143px;top:793.9px;"><span class="cjk" style="width:57px;">消费者</span>2<span style="display:inline-block;width:18.5px;">:</span>message:8</div>
<div class="code con" id="co5" style="left:143px;top:824.5px;"><span class="cjk" style="width:57px;">消费者</span>2<span style="display:inline-block;width:18.5px;">:</span>message:9</div>
<!-- RUN-END -->

<!-- ===== bottom stripe ===== -->
<div class="abs" style="left:6px;top:842px;width:1595px;height:1px;background:#cfcfcf;"></div>
<div class="abs" style="left:6px;top:843px;width:1595px;height:30.5px;background:#ededed;"></div>
<div class="abs" style="left:6px;top:874px;width:1595px;height:3px;background:#f4f4f4;"></div>
<!-- BOTTOM-START -->
<div class="abs" style="left:36px;top:843px;width:80px;height:31px;background:#bdbdbd;"></div>
<svg class="abs" style="left:50px;top:850px" width="16" height="18" viewBox="0 0 16 18"><path d="M2 1.500l12 7.500-12 7.500z" fill="#5e5e5e"/></svg>
<div class="t ui" id="bt0" style="left:72.500px;top:851.500px;font-size:16.500px;letter-spacing:0.3px;">Run</div>
<svg class="abs" style="left:132px;top:851px" width="17" height="15" viewBox="0 0 17 15" fill="#5e5e5e"><rect x="0.500" y="1" width="2.500" height="2.500"/><rect x="5" y="1" width="11.500" height="2.500"/><rect x="0.500" y="6" width="2.500" height="2.500"/><rect x="5" y="6" width="11.500" height="2.500"/><rect x="0.500" y="11" width="2.500" height="2.500"/><rect x="5" y="11" width="11.500" height="2.500"/></svg>
<div class="t ui" id="bt1" style="left:154.500px;top:851.500px;font-size:16.500px;letter-spacing:0.3px;">TODO</div>
<svg class="abs" style="left:234px;top:850px" width="16" height="16" viewBox="0 0 16 16"><circle cx="8" cy="8" r="7" fill="#5e5e5e"/><path d="M8 4v5" stroke="#ececec" stroke-width="2"/><circle cx="8" cy="11.700" r="1.200" fill="#ececec"/></svg>
<div class="t ui" id="bt2" style="left:256.500px;top:851.500px;font-size:16.500px;letter-spacing:0.3px;">Problems</div>
<svg class="abs" style="left:361px;top:850px" width="18" height="16" viewBox="0 0 18 16"><rect x="0.500" y="1" width="17" height="14" fill="#5e5e5e"/><path d="M3.500 4.500l4 3.500-4 3.500M9 12h5" fill="none" stroke="#ececec" stroke-width="1.600"/></svg>
<div class="t ui" id="bt3" style="left:385px;top:851.5px;font-size:16.5px;letter-spacing:0.65px;">Terminal</div>
<svg class="abs" style="left:481px;top:848px" width="22" height="22" viewBox="0 0 22 22"><circle cx="9" cy="9" r="7" fill="none" stroke="#5e5e5e" stroke-width="1.800"/><path d="M9 4.500V9l2.500 1.500" fill="none" stroke="#5e5e5e" stroke-width="1.600"/><path d="M11 10.500l9 5-9 5z" fill="#5e5e5e" stroke="#ececec" stroke-width="1"/></svg>
<div class="t ui" id="bt4" style="left:506.5px;top:851.5px;font-size:16.5px;letter-spacing:0.7px;">Profiler</div>
<svg class="abs" style="left:592px;top:848px" width="20" height="20" viewBox="0 0 20 20"><path d="M2.500 5l5-3 4 4-2 2-1.500-1L6.500 8.500z" fill="#5e5e5e"/><path d="M8.500 8l9 9" stroke="#5e5e5e" stroke-width="2.800" stroke-linecap="round"/></svg>
<div class="t ui" id="bt5" style="left:617.500px;top:851.500px;font-size:16.500px;letter-spacing:0.3px;">Build</div>
<!-- event log -->
<svg class="abs" style="left:1451px;top:850px" width="22" height="20" viewBox="0 0 22 20"><circle cx="10" cy="10" r="8.800" fill="#f39a1d"/><path d="M7.500 5.500h8v4h3.500v9h-11.500z" fill="#e9dcc8" opacity="0.900"/></svg>
<div class="t ui" id="bt6" style="left:1475.500px;top:851.500px;font-size:16.500px;letter-spacing:0.5px;color:#333;-webkit-text-stroke:0;">Event Log</div>
<!-- watermark logo silhouettes -->
<svg class="abs" style="left:1450px;top:820px" width="124" height="23" viewBox="0 0 124 23" fill="#ececec"><path d="M6 22L7.500 4l5-1.500L14 22z"/><path d="M38 22h3v-5h-3zM45 22l1-15 4-1 1 16z"/><path d="M65 22l1.500-19 5.500-2 1 21z"/><path d="M55 22h3v-4h-3zM58 22h3v-5h-3z"/><path d="M98 22h3v-5h-3zM104 22l1-15 4-1 1 16zM114 22h3v-5h-3z"/></svg>
<!-- watermark -->
<div class="t" id="wm" style="left:1319px;top:839px;font-family:'Liberation Sans',sans-serif;font-size:31px;font-weight:bold;color:rgba(255,255,255,0.75);letter-spacing:0px;"><span class="cjk" style="width:124px;font-size:31px;overflow:visible;">千锋教育</span></div>
<!-- BOTTOM-END -->

<!-- ===== drawing toolbar (black) ===== -->
<div class="abs" style="left:507px;top:8px;width:594px;height:47px;background:#050505;border-radius:7px;"></div>
<!-- DRAWBAR-START -->
<svg class="abs" style="left:507px;top:8px" width="594" height="47" viewBox="507 8 594 47">
<g fill="#3a3a3a"><circle cx="512.500" cy="25" r="1.500"/><circle cx="518" cy="25" r="1.500"/><circle cx="512.500" cy="31" r="1.500"/><circle cx="518" cy="31" r="1.500"/><circle cx="512.500" cy="37" r="1.500"/><circle cx="518" cy="37" r="1.500"/></g>
<circle cx="557" cy="31.500" r="9.500" fill="#1e9bff"/>
<circle cx="606" cy="31.500" r="9.500" fill="#ff3fa6"/>
<circle cx="655" cy="31.500" r="9.500" fill="#33f01c"/>
<!-- shuffle -->
<g fill="none" stroke="#f2f2f2" stroke-width="1.800" stroke-linecap="round" stroke-linejoin="round">
<path d="M697 26h3.500c3 0 5 11.500 9 11.500h6"/><path d="M697 37.500h3.500c1.500 0 2.300-1.500 3.200-3.300M707.300 29.300c.8-1.700 1.600-3.300 3.200-3.300h5"/><path d="M713 23l3.300 3-3.300 3M713 34.500l3.300 3-3.300 3"/>
</g>
<path d="M749 24v15" stroke="#3a3a3a" stroke-width="1.300"/>
<!-- squiggle -->
<path d="M780 37.500c4.500 0 5.500-2.500 7.500-6s3.500-5 9-5.500" fill="none" stroke="#f2f2f2" stroke-width="1.700" stroke-linecap="round"/>
<!-- arrow -->
<g fill="none" stroke="#f2f2f2" stroke-width="1.900" stroke-linecap="round" stroke-linejoin="round"><path d="M842 25l-13.500 13.500"/><path d="M828.500 30.500v8h8"/></g>
<!-- rectangle -->
<rect x="873" y="25" width="24.500" height="13.500" rx="1.500" fill="none" stroke="#f2f2f2" stroke-width="1.900"/>
<!-- circle -->
<circle cx="937" cy="32" r="8.300" fill="none" stroke="#f2f2f2" stroke-width="1.900"/>
<!-- T -->
<path d="M977.500 29v-3.200h13V29M984 25.800v13.400M981 39.200h6" fill="none" stroke="#f2f2f2" stroke-width="1.800" stroke-linejoin="round"/>
<path d="M1020 24v15" stroke="#3a3a3a" stroke-width="1.300"/>
<!-- eraser -->
<g fill="none" stroke="#f2f2f2" stroke-width="1.800" stroke-linejoin="round"><path d="M1062.500 23.500l6.500 6.500-9 9h-5l-3-3z"/><path d="M1056.500 29.500l6.500 6.500"/></g>
<!-- close -->
<circle cx="1093" cy="15.500" r="5.500" fill="#1a1a1a" stroke="#4a4a4a" stroke-width="1"/>
<path d="M1090.500 13l5 5M1095.500 13l-5 5" stroke="#6a6a6a" stroke-width="1.200"/>
</svg>
<!-- DRAWBAR-END -->


<!-- ANNO-START -->
<svg class="abs" style="left:0;top:0" width="1602" height="877" viewBox="0 0 1602 877" fill="none" stroke="#ff2f9f" stroke-width="6.100" stroke-linecap="round" stroke-linejoin="round">
<path d="M292.200 365.700C292.500 395 291 425 289.800 448.800"/>
<path d="M307.200 437.500L311.500 453.500C331 419 354 385 376 359.500"/>
<path d="M272.700 467.700H352.400"/>
<circle cx="352.400" cy="498.500" r="5.200" fill="#ff2f9f" stroke="none"/>
<path d="M319.500 486.200C318 510 316.500 538 321.500 560C329 590 352 611 396 620C440 628 488 626 530 609C590 583 650 520 709.500 481.500"/>
<path d="M651 483.200C672 480 695 478.200 713.600 478.700"/>
<path d="M712.500 480C711 499 704 519 687.300 540"/>
<path d="M484.900 326C495 324 503 323.500 507 325.500C514 329 513.500 336 508 344C503 351.500 497 360 490.300 368.200C503 366.500 515 365 527.100 363.900"/>
<path d="M505.500 414.700L507 429.500C520 411 540 381 558.500 357.400"/>
<path d="M554.200 426.700L576.500 461.500"/>
<path d="M561 461.300L578 464.500L576.500 452" stroke-width="6.500"/>
<path d="M727.300 477.900L920.800 476.900"/>
<path d="M716 489.500L884.600 489.900"/>
</svg>
<!-- mouse cursor -->
<svg class="abs" style="left:331px;top:465px" width="16" height="24" viewBox="0 0 16 24"><path d="M2 1.500v17l4-3.800 2.800 6.800 3-1.300-2.800-6.500h5.500z" fill="#111" stroke="#fff" stroke-width="1.300" stroke-linejoin="round"/></svg>
<!-- ANNO-END -->


</div>
</body>
</html>
